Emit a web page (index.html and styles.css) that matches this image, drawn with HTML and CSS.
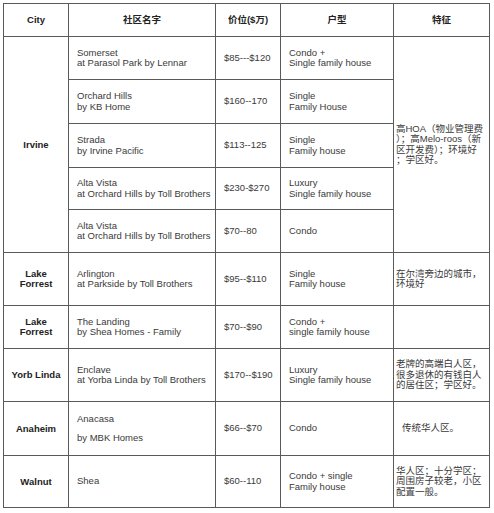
FILE: index.html
```html
<!DOCTYPE html>
<html lang="zh">
<head>
<meta charset="utf-8">
<title>社区列表</title>
<link rel="stylesheet" href="styles.css">
</head>
<body>
<table class="grid">
  <colgroup>
    <col class="c-city">
    <col class="c-name">
    <col class="c-price">
    <col class="c-type">
    <col class="c-feat">
  </colgroup>
  <thead>
    <tr class="h33">
      <th>City</th>
      <th>社区名字</th>
      <th>价位($万)</th>
      <th>户型</th>
      <th>特征</th>
    </tr>
  </thead>
  <tbody>
    <tr class="h43">
      <td class="city" rowspan="5">Irvine</td>
      <td class="txt">Somerset<br>at Parasol Park by Lennar</td>
      <td class="txt">$85---$120</td>
      <td class="txt">Condo +<br>Single family house</td>
      <td class="feat" rowspan="5">高HOA（物业管理费<br>）；高Melo-roos（新<br>区开发费）；环境好<br>；学区好。</td>
    </tr>
    <tr class="h44">
      <td class="txt">Orchard Hills<br>by KB Home</td>
      <td class="txt">$160--170</td>
      <td class="txt">Single<br>Family House</td>
    </tr>
    <tr class="h44">
      <td class="txt">Strada<br>by Irvine Pacific</td>
      <td class="txt">$113--125</td>
      <td class="txt">Single<br>Family house</td>
    </tr>
    <tr class="h42">
      <td class="txt">Alta Vista<br>at Orchard Hills by Toll Brothers</td>
      <td class="txt">$230-$270</td>
      <td class="txt">Luxury<br>Single family house</td>
    </tr>
    <tr class="h43">
      <td class="txt">Alta Vista<br>at Orchard Hills by Toll Brothers</td>
      <td class="txt">$70--80</td>
      <td class="txt">Condo</td>
    </tr>
    <tr class="h53">
      <td class="city">Lake<br>Forrest</td>
      <td class="txt">Arlington<br>at Parkside by Toll Brothers</td>
      <td class="txt">$95--$110</td>
      <td class="txt">Single<br>Family house</td>
      <td class="feat">在尔湾旁边的城市，<br>环境好</td>
    </tr>
    <tr class="h43">
      <td class="city">Lake<br>Forrest</td>
      <td class="txt">The Landing<br>by Shea Homes - Family</td>
      <td class="txt">$70--$90</td>
      <td class="txt">Condo +<br>single family house</td>
      <td class="feat"></td>
    </tr>
    <tr class="h53">
      <td class="city">Yorb Linda</td>
      <td class="txt">Enclave<br>at Yorba Linda by Toll Brothers</td>
      <td class="txt">$170--$190</td>
      <td class="txt">Luxury<br>Single family house</td>
      <td class="feat">老牌的高端白人区，<br>很多退休的有钱白人<br>的居住区；学区好。</td>
    </tr>
    <tr class="h54">
      <td class="city">Anaheim</td>
      <td class="txt"><p class="para">Anacasa</p><p class="para">by MBK Homes</p></td>
      <td class="txt">$66--$70</td>
      <td class="txt">Condo</td>
      <td class="feat indent">传统华人区。</td>
    </tr>
    <tr class="h52">
      <td class="city">Walnut</td>
      <td class="txt">Shea</td>
      <td class="txt">$60--110</td>
      <td class="txt">Condo + single<br>Family house</td>
      <td class="feat">华人区；十分学区；<br>周围房子较老，小区<br>配置一般。</td>
    </tr>
  </tbody>
</table>
</body>
</html>
```

FILE: styles.css
```css
html, body {
  margin: 0;
  padding: 0;
  background: #ffffff;
}

body {
  padding: 3px 0 0 3px;
  font-family: "Liberation Sans", Arial, "Noto Sans CJK SC", sans-serif;
  font-size: 9.5px;
  line-height: 10.5px;
  color: #3a3a3a;
}

.grid {
  border-collapse: collapse;
  table-layout: fixed;
  width: 487px;
}

.c-city { width: 65px; }
.c-name { width: 147px; }
.c-price { width: 65px; }
.c-type { width: 113px; }
.c-feat { width: 96px; }

.grid th,
.grid td {
  border: 1px solid #5a5a5a;
  padding: 0;
  vertical-align: middle;
}

.grid th {
  font-weight: bold;
  text-align: center;
  color: #222222;
}

.city {
  font-weight: bold;
  text-align: center;
  color: #222222;
  line-height: 10px;
}

.txt {
  padding-left: 8px !important;
  text-align: left;
  white-space: nowrap;
}

.feat {
  padding-left: 2px !important;
  text-align: left;
  white-space: nowrap;
  color: #3a3a3a;
}

.indent {
  padding-left: 8px !important;
}

.para {
  margin: 0;
}

.para + .para {
  margin-top: 9px;
}

.h33 { height: 33px; }
.h42 { height: 42px; }
.h43 { height: 43px; }
.h44 { height: 44px; }
.h52 { height: 52px; }
.h53 { height: 53px; }
.h54 { height: 54px; }
```
